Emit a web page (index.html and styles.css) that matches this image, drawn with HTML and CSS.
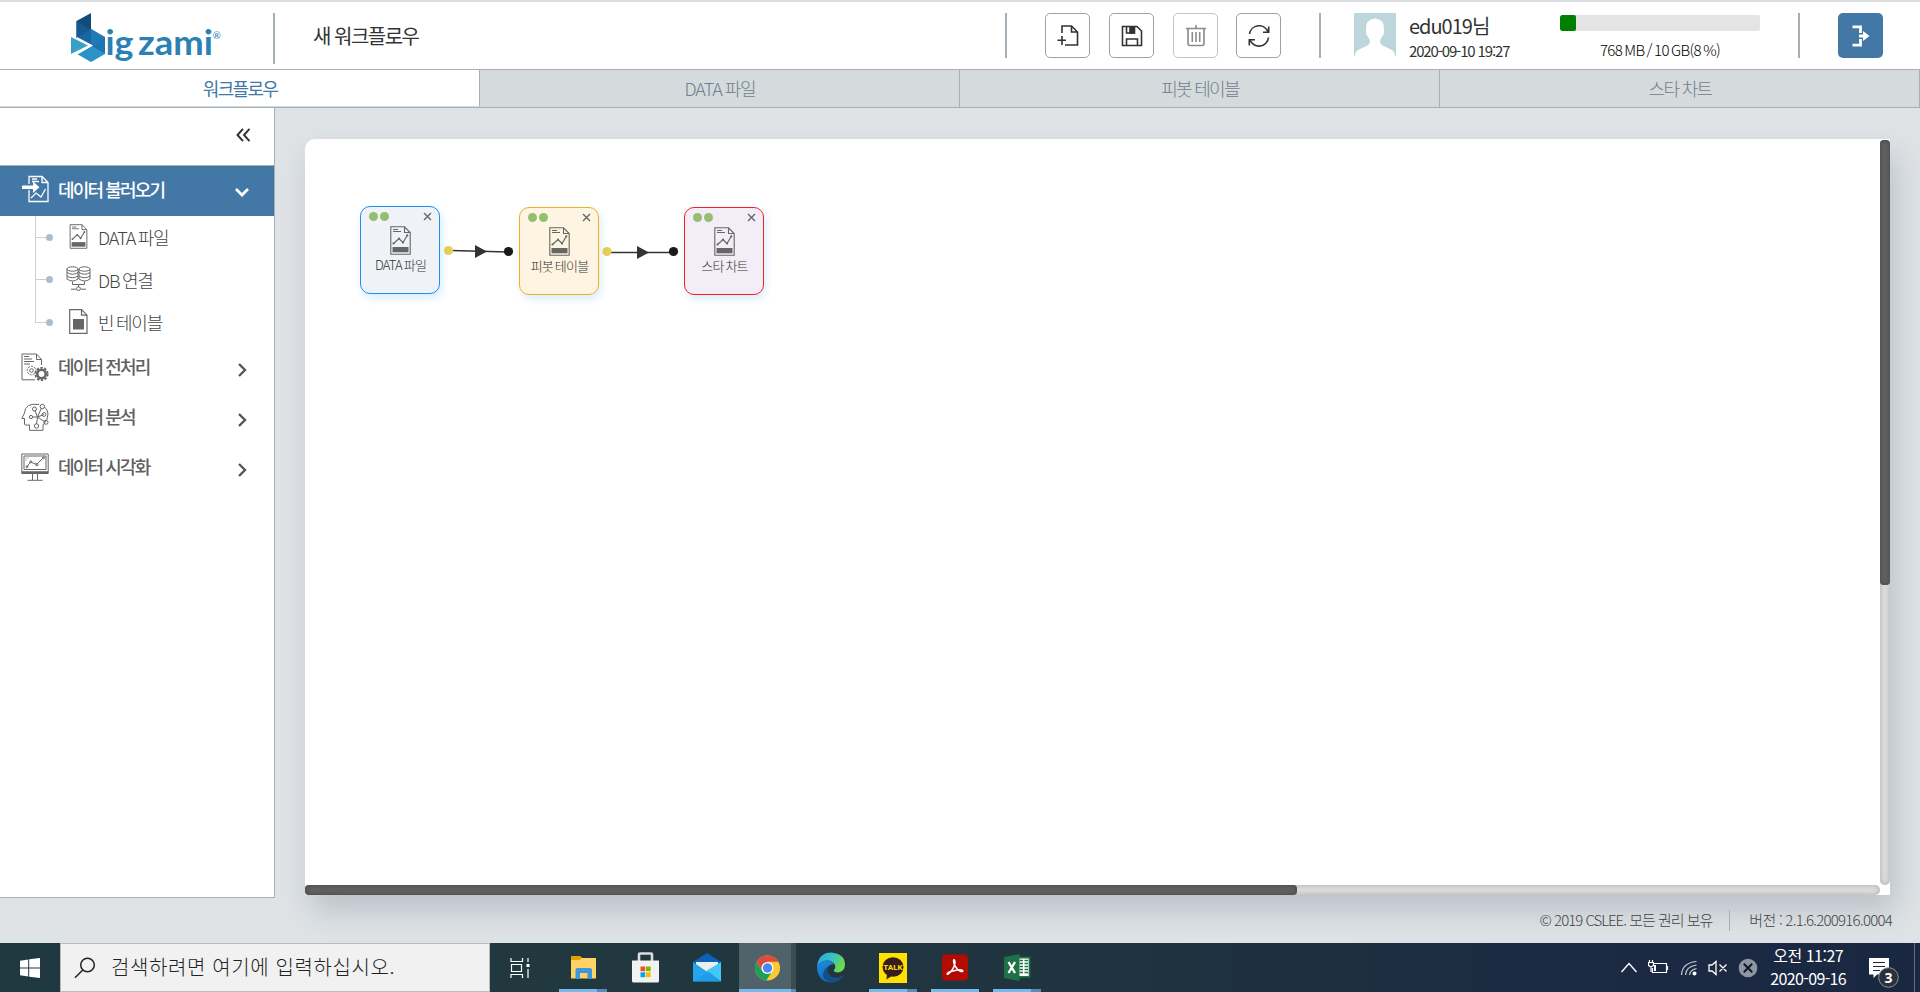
FILE: index.html
```html
<!DOCTYPE html>
<html lang="ko">
<head>
<meta charset="utf-8">
<title>Bigzami</title>
<link rel="stylesheet" href="styles.css">
</head>
<body>
<svg class="defs" width="0" height="0">
  <symbol id="chart-file" viewBox="0 0 21 29">
    <path d="M.8.8H14.5L20.2 6.500V28.200H.8zM14.500.8V6.500H20.200" fill="none" stroke="currentColor" stroke-width="1.100"/>
    <path d="M3 3.500H8M3 5.500H11" stroke="currentColor" stroke-width="1"/>
    <path d="M3.500 17.500 9 12.500 13 16.500 17.500 9" fill="none" stroke="currentColor" stroke-width="1.200"/>
    <g fill="currentColor"><circle cx="3.500" cy="17.500" r="1.100"/><circle cx="9" cy="12.700" r="1.100"/><circle cx="13" cy="16.500" r="1.100"/><circle cx="17.300" cy="9.300" r="1.100"/><path class="slab" d="M2.500 21H18.500V26.300H2.500z"/></g>
  </symbol>
</svg>
<div class="app">
  <header class="header">
    <div class="brand">
      <svg width="156" height="56" viewBox="0 0 156 56">
        <path d="M5.500 9 20 1V18L5.500 27z" fill="#124a78"/>
        <path d="M5.500 9 20 18 5.500 27z" fill="#175a91"/>
        <path d="M5.500 27 20 17 33 25 20 34z" fill="#1568a3"/>
        <path d="M20 17 34 25V42L20 34z" fill="#2279b5"/>
        <path d="M6 42 20 34 34 42 20 50z" fill="#2993c6"/>
        <path d="M20 34 34 26V42z" fill="#1c76b3"/>
        <path d="M0 25 17 33.500 0 42z" fill="#38a0c6"/>
        <path d="M5.500 26 20 33.500 5.500 42" fill="none" stroke="#fff" stroke-width="2"/>
        <text class="logo-text" x="34.500" y="43" textLength="28" lengthAdjust="spacingAndGlyphs">ig</text>
        <text class="logo-text" x="67" y="43" textLength="75" lengthAdjust="spacingAndGlyphs">zami</text>
        <text class="logo-mark" x="141.500" y="27">®</text>
      </svg>
    </div>
    <i class="bar tall"></i>
    <h1 class="title">새 워크플로우</h1>
    <i class="bar"></i>
    <div class="tools">
      <button class="tool"><svg width="22" height="22" viewBox="0 0 22 22"><path d="M5 8V1H14.500L20.500 7V20H8M14.500 1V7H20.500M5 11V20M0.500 15.300H9" /></svg></button>
      <button class="tool"><svg width="22" height="22" viewBox="0 0 22 22"><path d="M1.500 1.500H16L20.500 6V20.500H1.500zM5.500 20V14H16.500V20M5.500 2V8H13.500V2"/><path class="solid" d="M9 2H13V8H9z"/></svg></button>
      <button class="tool off"><svg width="22" height="22" viewBox="0 0 22 22"><path d="M1 3.500H21M11 0V3.500M3 4V18.500Q3 20.500 5 20.500H17Q19 20.500 19 18.500V4M7.300 7V17M11 7V17M14.700 7V17"/></svg></button>
      <button class="tool"><svg width="22" height="22" viewBox="0 0 22 22"><path d="M1.500 9A9.600 9.600 0 0 1 20 7M20.500 12.500A9.600 9.600 0 0 1 2 15M20.700 1.500V7.300H15M1.300 20.500V14.700H7"/></svg></button>
    </div>
    <i class="bar"></i>
    <div class="user">
      <svg width="42" height="43" viewBox="0 0 42 43"><path fill="#bdd6dc" d="M0 0H42V43H0z"/><path fill="#fff" d="M1 43Q1 38 6 36L13.500 32.500Q16.500 30.500 15.800 27L13.500 23Q11.500 21 12 17Q11.500 6 21 5.500Q30.500 6 30 17Q30.500 21 28.500 23L26.200 27Q25.500 30.500 28.500 32.500L36 36Q41 38 41 43z"/></svg>
      <div class="who"><span class="name">edu019님</span><span class="time">2020-09-10 19:27</span></div>
    </div>
    <div class="quota"><div class="meter"><div class="fill" style="width:8%"></div></div><span class="usage">768 MB / 10 GB(8 %)</span></div>
    <i class="bar"></i>
    <button class="exit"><svg width="20" height="22" viewBox="0 0 20 22"><path d="M1.500 1.800H9.500V8M1.500 20.200H9.500V14M8 11H14" fill="none" stroke="#fff" stroke-width="2.800"/><path d="M12 6 18.500 11 12 16z" fill="#fff"/></svg></button>
  </header>
  <nav class="tabs">
    <a class="tab on">워크플로우</a><a class="tab latin">DATA 파일</a><a class="tab">피봇 테이블</a><a class="tab">스타 차트</a>
  </nav>
  <main class="main">
    <aside class="side">
      <div class="fold"><svg width="15" height="14" viewBox="0 0 15 14"><path d="M7 .8 1.500 7 7 13.200M13.500.8 8 7 13.500 13.200"/></svg></div>
      <div class="cat open">
        <svg class="ico" width="28" height="28" viewBox="0 0 28 28"><path d="M8 9V1.500H21L27 7.500V26.500H8V15M21 1.500V7.500H27M11 4H16M11 6.500H18M10 23 15 18 20 22 24.500 14" fill="none" stroke="#fff" stroke-width="1.300"/><path d="M1 10.500H12V6.500L18.500 12.200 12 18V14H1z" fill="#fff"/></svg>
        <span class="label">데이터 불러오기</span>
        <svg class="chev" width="16" height="16" viewBox="0 0 16 16"><path d="M2 5 8 11 14 5"/></svg>
      </div>
      <ul class="tree">
        <li class="leaf"><i class="dot"></i><span class="pic"><svg width="19" height="25"><use href="#chart-file"/></svg></span>DATA 파일</li>
        <li class="leaf"><i class="dot"></i><span class="pic"><svg width="25" height="25" viewBox="0 0 25 25"><g fill="none" stroke="#666" stroke-width="1"><ellipse cx="6.500" cy="3" rx="5.500" ry="2.200"/><ellipse cx="18.500" cy="3" rx="5.500" ry="2.200"/><path d="M1 3V13Q6.500 17 12 13V3M1 6.500Q6.500 10 12 6.500M1 10Q6.500 13.500 12 10M13 3V13Q18.500 17 24 13V3M13 6.500Q18.500 10 24 6.500M13 10Q18.500 13.500 24 10M6.500 15.500V18.500H18.500V15.500M12.500 18.500V21M5 23.200H10M15 23.200H20"/><circle cx="12.500" cy="22.700" r="1.900"/></g></svg></span>DB 연결</li>
        <li class="leaf"><i class="dot"></i><span class="pic"><svg width="19" height="25" viewBox="0 0 19 25"><path d="M.7.700H12.500L18 6.200V24.300H.7zM12.500.7V6.200H18" fill="none" stroke="#666" stroke-width="1.200"/><path d="M4 10H15V20.500H4z" fill="#666"/></svg></span>빈 테이블</li>
      </ul>
      <div class="cat">
        <svg class="ico" width="28" height="28" viewBox="0 0 28 28"><g fill="none" stroke="#666"><path d="M14 26.800H1V1H15.500L20.500 6.500V12M15.500 1V6.500H20.500M3 3.500H8M3 6H11M3 8.500H13M3 11H9"/><circle cx="10.500" cy="17.500" r="4.300" stroke-dasharray="2.200 1"/><circle cx="10.500" cy="17.500" r="1.800"/><circle cx="20.500" cy="21" r="4.200" stroke-width="2.600"/><circle cx="20.500" cy="21" r="6.200" stroke-width="1.800" stroke-dasharray="2.400 1.500"/></g></svg>
        <span class="label">데이터 전처리</span>
        <svg class="chev" width="16" height="16" viewBox="0 0 16 16"><path d="M5 2 11 8 5 14"/></svg>
      </div>
      <div class="cat">
        <svg class="ico" width="28" height="28" viewBox="0 0 28 28"><g fill="none" stroke="#666"><path d="M18 1.500Q4 -.5 3.500 10L.8 15.500H3.500V21.500Q3.500 22.500 8.500 22V27.300H22V22Q27.500 16 27 11Q26.500 6 23.500 4M16.500 14 14 7.500M16.500 14 20.500 5M16.500 14H11.500M16.500 14 23 11.500M16.500 14 15.500 21M16.500 14 24 19"/><circle cx="13.500" cy="6" r="2"/><circle cx="21.300" cy="3.500" r="2.200"/><circle cx="10" cy="14" r="1.600"/><circle cx="23" cy="11.500" r="1.900"/><circle cx="15.500" cy="23" r="2.200"/><circle cx="25" cy="19.300" r="2"/></g></svg>
        <span class="label">데이터 분석</span>
        <svg class="chev" width="16" height="16" viewBox="0 0 16 16"><path d="M5 2 11 8 5 14"/></svg>
      </div>
      <div class="cat">
        <svg class="ico" width="28" height="28" viewBox="0 0 28 28"><g fill="none" stroke="#666"><path d="M.8 1H27.200V20.500H.8zM3 3H25V16.500H3zM11.500 21V27M16.500 21V27M6.500 27.300H21.500"/><path d="M.8 19.200H27.200" stroke-width="2"/><path d="M6 13.500 9.500 9 15.500 11.500 22.500 4.500"/><circle cx="6" cy="13.800" r="1"/><circle cx="9.800" cy="8.800" r="1"/><circle cx="16" cy="11.500" r="1.200"/><circle cx="22.500" cy="4.800" r="1"/><path d="M4 5H8M4 7H6"  stroke="#9cc3e8"/></g></svg>
        <span class="label">데이터 시각화</span>
        <svg class="chev" width="16" height="16" viewBox="0 0 16 16"><path d="M5 2 11 8 5 14"/></svg>
      </div>
    </aside>
    <section class="work">
      <div class="canvas">
        <div class="stage">
          <svg class="links" width="420" height="60" viewBox="0 0 420 60">
            <g stroke="#333" stroke-width="1.300"><path d="M13 24.500 70 26"/><path d="M172 26.500H235"/></g>
            <g fill="#333"><path d="M37 19V32L49 25.500zM199 20V33L211 26.500z"/></g>
            <g fill="#e8cf58"><circle cx="10.500" cy="24.500" r="4.600"/><circle cx="169" cy="25.500" r="4.600"/></g>
            <g fill="#1a1a1a"><circle cx="70.500" cy="25.500" r="4.600"/><circle cx="235.500" cy="25.500" r="4.600"/></g>
          </svg>
          <div class="node data"><i></i><i></i><svg class="x" width="9" height="9"><path d="M1 1 8 8M8 1 1 8"/></svg><svg class="file" width="21" height="29"><use href="#chart-file"/></svg><span>DATA 파일</span></div>
          <div class="node pivot"><i></i><i></i><svg class="x" width="9" height="9"><path d="M1 1 8 8M8 1 1 8"/></svg><svg class="file" width="21" height="29"><use href="#chart-file"/></svg><span>피봇 테이블</span></div>
          <div class="node star"><i></i><i></i><svg class="x" width="9" height="9"><path d="M1 1 8 8M8 1 1 8"/></svg><svg class="file" width="21" height="29"><use href="#chart-file"/></svg><span>스타 차트</span></div>
        </div>
        <div class="vtrack"><div class="vthumb"></div></div>
        <div class="htrack"><div class="hthumb"></div></div>
      </div>
      <footer class="foot"><span class="copy">© 2019 CSLEE. 모든 권리 보유</span><i></i><span class="ver">버전 : 2.1.6.200916.0004</span></footer>
    </section>
  </main>
</div>
<div class="taskbar">
  <div class="start"><svg width="20" height="20" viewBox="0 0 20 20"><path fill="#fff" d="M0 2.700 8.200 1.500V9.400H0zM9.200 1.300 20 0V9.400H9.200zM0 10.500H8.200V18.500L0 17.300zM9.200 10.500H20V20L9.200 18.700z"/></svg></div>
  <div class="search"><svg width="22" height="22" viewBox="0 0 22 22"><circle cx="13.500" cy="8" r="6.800" fill="none" stroke="#222" stroke-width="1.500"/><path d="M8.800 13 1 20.800" stroke="#222" stroke-width="1.500"/></svg><span>검색하려면 여기에 입력하십시오.</span></div>
  <div class="apps">
    <div class="app-slot view"><svg width="20" height="20" viewBox="0 0 20 20"><path d="M1 0V3.500H12.500V0M1 20V16.500H12.500V20M1.500 6.500H11.500V13.500H1.500zM18 0V4M18 11V20" fill="none" stroke="#fff" stroke-width="1.200"/><path d="M16.500 6H19.500V9H16.500z" fill="#fff"/></svg></div>
    <div class="app-slot run"><svg width="27" height="24" viewBox="0 0 27 24"><path fill="#e2a100" d="M1 0H10L12.500 2V6H1z"/><path fill="#ffd363" d="M1 4H9.500L12 2H26V22.500H1z"/><path fill="#3c97dc" d="M5.500 23V14Q5.500 12 7.500 12H20Q22 12 22 14V23H17.500V17H10V23z"/></svg></div>
    <div class="app-slot"><svg width="27" height="31" viewBox="0 0 27 31"><path d="M7 10V2.500Q7 1.500 8 1.500H19Q20 1.500 20 2.500V10" fill="none" stroke="#ddd" stroke-width="2.600"/><path fill="#f2f2f2" d="M0 8.500H27V29Q27 30.500 25.500 30.500H1.500Q0 30.500 0 29z"/><path fill="#f25022" d="M8.500 14.500H13.200V19.200H8.500z"/><path fill="#7fba00" d="M14 14.500H18.700V19.200H14z"/><path fill="#00a4ef" d="M8.500 20.300H13.200V25.200H8.500z"/><path fill="#ffb900" d="M14 20.300H18.700V25.200H14z"/></svg></div>
    <div class="app-slot"><svg width="28" height="29" viewBox="0 0 28 29"><path fill="#0a63b8" d="M0 9 14 0 28 9 14 20z"/><path fill="#eee" d="M3 9H25V13L14 19 3 13z"/><path fill="#25a5ee" d="M0 9 28 28.500H0z"/><path fill="#41c8f8" d="M28 9V28.500L13 18z"/><path fill="#1f98e4" d="M0 28.500 16 18.500 28 28.500z" opacity=".6"/></svg></div>
    <div class="app-slot run now"><svg width="27" height="28" viewBox="0 0 28 28"><circle cx="14" cy="14" r="13" fill="#fcc934"/><path fill="#dd4b3e" d="M2.700 7.500A13 13 0 0 1 25.300 7.500H14L8 16z"/><path fill="#1e9e58" d="M2.700 7.500A13 13 0 0 0 12.800 27L18.500 18 8.500 17z"/><circle cx="14" cy="14" r="6.300" fill="#fff"/><circle cx="14" cy="14" r="4.900" fill="#4c86ee"/></svg></div>
    <div class="app-slot"><svg width="30" height="31" viewBox="0 0 30 31"><defs><linearGradient id="edge-top" x2="1" y2=".4"><stop stop-color="#2aa6dd"/><stop offset=".55" stop-color="#37bfc6"/><stop offset="1" stop-color="#70d84c"/></linearGradient><linearGradient id="edge-low" x2=".6" y2="1"><stop stop-color="#1d8fe0"/><stop offset="1" stop-color="#1161b4"/></linearGradient></defs><path fill="url(#edge-top)" d="M1 14Q3 .5 15 .5Q29 1.500 29 13Q28.500 20 22 20.500Q17.500 20.500 18 18Q20 16 19 13Q17 8.500 11 8.500Q4 9 1 14z"/><path fill="url(#edge-low)" d="M1 14Q4 8.500 11 8.500Q16 8.500 18 12Q9 13.500 11.500 20.500Q14 26 20 26Q24 26 27.500 23.500Q23 30.500 15 30.500Q1 29.500 1 14z"/><path fill="#134d8c" d="M11.500 15Q9.500 24 18 26.500Q24 27 27.500 23.300Q23 30.500 16 30.500Q5 28 7.500 20Q8.500 16.500 11.500 15z"/></svg></div>
    <div class="app-slot run"><svg width="28" height="30" viewBox="0 0 28 30"><path fill="#ffe100" d="M0 0H28V30H0z"/><ellipse cx="14" cy="14" rx="10.500" ry="9.800" fill="#371d1e"/><path fill="#371d1e" d="M8 20 7.500 26.500 14 22z"/><text class="talk" x="14" y="17">TALK</text></svg></div>
    <div class="app-slot run solo"><svg width="26" height="27" viewBox="0 0 27 27"><rect width="27" height="27" rx="4" fill="#b30b00"/><path d="M6 20.500Q12 16.500 13.500 9Q13.500 5.500 12.500 5.500Q11.500 6 12.500 9.500Q15.500 17 20.500 17.800Q22.500 17.500 21 16.200Q17.500 14.700 6.800 18.500Q4.500 20.500 6 20.500" fill="none" stroke="#fff" stroke-width="1.600"/></svg></div>
    <div class="app-slot run"><svg width="27" height="27" viewBox="0 0 27 27"><path fill="#fff" d="M14 4H25V23H14z"/><path d="M15.500 6.500H19M15.500 9.500H19M15.500 12.500H19M15.500 15.500H19M15.500 18.500H19M20.500 6.500H24M20.500 9.500H24M20.500 12.500H24M20.500 15.500H24M20.500 18.500H24M14 3.600H25.500V22.800H14" fill="none" stroke="#1e7145" stroke-width="1.700"/><path fill="#1e7145" d="M0 3 15.500 0V27L0 24z"/><path d="M4.500 8 11 19M11 8 4.500 19" stroke="#fff" stroke-width="2.300"/></svg></div>
  </div>
  <div class="tray">
    <svg width="18" height="20" viewBox="0 0 18 20"><path d="M1.500 14 9 5.500 16.500 14" fill="none" stroke="#fff" stroke-width="1.400"/></svg>
    <svg width="21" height="20" viewBox="0 0 21 20"><path d="M6 5.500H18.500V14.500H4.500V10M19.500 8V12M1.500 2V5M4.500 2V5M.5 4.500H5.500V7.500L3 9 .5 7.500zM3 9V14" fill="none" stroke="#fff" stroke-width="1.200"/><path fill="#fff" d="M6 7H8V13H6z"/></svg>
    <svg width="18" height="20" viewBox="0 0 18 20"><path d="M1.500 17Q2 5 16.500 3.500M5.500 17Q6 8.500 16.500 7M9.500 17Q10 12 16.500 10.500" fill="none" stroke="#c9ced8" stroke-width="1.200"/><circle cx="14.500" cy="15.500" r="2" fill="#fff"/></svg>
    <svg width="20" height="20" viewBox="0 0 20 20"><path d="M1 7H4L8 3.500V16.500L4 13H1zM11.500 6.500 18.500 13.500M18.500 6.500 11.500 13.500" fill="none" stroke="#fff" stroke-width="1.300"/></svg>
    <svg width="20" height="20" viewBox="0 0 20 20"><circle cx="10" cy="10" r="9.300" fill="#8e95a3"/><path d="M5.800 5.800 14.200 14.200M14.200 5.800 5.800 14.200" stroke="#111824" stroke-width="2"/></svg>
  </div>
  <div class="clock"><span class="hour">오전 11:27</span><span class="day">2020-09-16</span></div>
  <div class="notice"><svg width="30" height="32" viewBox="0 0 30 32"><path fill="#fff" d="M0 1H20V17.500H8L4.500 21V17.500H0z"/><path d="M4 5.500H16M4 9.500H16M4 13.500H11" stroke="#1b2942" stroke-width="1.200"/><circle cx="19.500" cy="20.500" r="9.800" fill="#2b303a" stroke="#8d929b"/><text class="badge" x="19.500" y="26">3</text></svg></div>
</div>
</body>
</html>
```
FILE: styles.css
```css
* { box-sizing: border-box; }
body { margin: 0; width: 1920px; height: 992px; overflow: hidden; display: flex; flex-direction: column; font-family: "Noto Sans CJK KR", "Noto Sans", sans-serif; color: #333; }
svg { display: block; flex: none; }
.defs { position: absolute; }
.app { height: 943px; flex: none; display: flex; flex-direction: column; }
button { padding: 0; font: inherit; }

.header { flex: none; height: 70px; border-top: 2px solid #dbdce1; border-bottom: 1px solid #a5afb4; padding-top: 11px; display: flex; align-items: flex-start; background: #fff; }
.brand { width: 273px; padding-left: 71px; }
.brand svg { margin-top: -1px; }
.logo-text { font: 700 34px Lato, sans-serif; fill: #2b80b4; }
.logo-mark { font: 10px Lato, sans-serif; fill: #2b80b4; }
.bar { width: 2px; height: 45px; background: #a5b0b6; flex: none; }
.bar.tall { height: 51px; }
.title { margin: 0 0 0 38px; width: 692px; font-size: 20px; font-weight: 400; line-height: 46px; letter-spacing: -1.500px; }
.tools { display: flex; gap: 19px; width: 312px; padding-left: 38px; }
.tool { width: 45px; height: 45px; border: 1px solid #a0a0a0; border-radius: 5px; background: #fff; display: grid; place-items: center; }
.tool:last-child { margin-left: -1px; }
.tool path { fill: none; stroke: #333; stroke-width: 1.600; }
.tool .solid { fill: #333; }
.tool.off { border-color: #c4c4c4; }
.tool.off path { stroke: #8a8a8a; }
.user { display: flex; width: 239px; padding-left: 33px; gap: 13px; }
.who { display: flex; flex-direction: column; white-space: nowrap; }
.name { font-size: 20px; line-height: 25px; letter-spacing: -1px; }
.time { font-size: 15px; line-height: 26px; letter-spacing: -1.150px; }
.quota { width: 238px; padding-top: 2px; }
.meter { width: 200px; height: 16px; border-radius: 2px; background: #e4e4e4; overflow: hidden; }
.fill { height: 16px; background: #008000; border-radius: 2px; }
.usage { display: block; width: 200px; text-align: center; font-size: 15px; font-weight: 300; color: #000; line-height: 22px; padding-top: 8px; letter-spacing: -.6px; word-spacing: -1.500px; }
.exit { margin-left: 38px; width: 45px; height: 45px; border: 0; border-radius: 5px; background: #4277a6; display: grid; place-items: center; }

.tabs { flex: none; display: flex; height: 38px; border-bottom: 1px solid #a5b0b5; background: #d5dadd; }
.tab { width: 480px; height: 37px; padding-left: 1px; border-right: 1px solid #a5b0b5; text-align: center; font-size: 18px; font-weight: 300; line-height: 37px; letter-spacing: -1.700px; color: #708090; }
.tab.latin { letter-spacing: -1.150px; word-spacing: -1px; }
.tab.on { background: #fff; color: #4277a6; font-weight: 400; border-bottom: 1px solid #d5dadd; }

.main { flex: 1; display: flex; background: #dfe3e6; }
.side { width: 275px; height: 790px; background: #fff; border-right: 1px solid #a5b0b9; border-bottom: 1px solid #a5b0b9; }
.fold { height: 58px; padding: 20px 0 0 236px; border-bottom: 1px solid #a5b0b5; }
.fold path { fill: none; stroke: #333; stroke-width: 2; }
.cat { height: 50px; display: flex; align-items: center; padding: 0 24px 0 21px; color: #606060; }
.label { flex: 1; padding-left: 9px; font-size: 18px; font-weight: 500; letter-spacing: -1.850px; line-height: 26px; margin-top: -7px; }
.ico { margin-top: -5px; }
.chev { margin-top: 2px; }
.chev path { fill: none; stroke: #555; stroke-width: 2.400; }
.cat.open { background: #4277a6; color: #fff; }
.cat.open .label { margin-top: -5px; }
.cat.open .chev path { stroke: #fff; stroke-width: 2.800; }
.tree { list-style: none; margin: 0; padding: 0 0 5px 35px; height: 128px; position: relative; }
.tree::before { content: ""; position: absolute; left: 35px; top: 0; width: 1px; height: 107px; background: #ccd0d4; }
.leaf { height: 42.500px; display: flex; align-items: center; font-size: 18px; font-weight: 300; letter-spacing: -1.200px; word-spacing: -1.200px; color: #444; }
.leaf::before { content: ""; width: 11px; height: 1px; background: #ccd0d4; }
.dot { width: 7px; height: 7px; border-radius: 50%; background: #afbccb; }
.pic { width: 25px; margin: -2px 7px 0 13px; display: grid; place-items: center; color: #666; }

.work { flex: 1; padding: 31px 28px 0 30px; display: flex; flex-direction: column; }
.canvas { flex: none; width: 1585px; height: 756px; background: #fff; border-radius: 10px 0 0 0; box-shadow: 6px 16px 30px rgba(110, 125, 140, .32); display: grid; grid-template: 746px 10px / 1575px 10px; }
.stage { position: relative; }
.vtrack { margin-top: 1px; background: #dcdcdc; border-radius: 5px; box-shadow: inset 0 0 5px #aaa; }
.vthumb { height: 445px; border-radius: 4px; background: #616161; box-shadow: inset 0 0 5px #444; }
.htrack { background: #dcdcdc; border-radius: 5px; box-shadow: inset 0 0 5px #aaa; }
.hthumb { width: 992px; height: 10px; border-radius: 4px; background: #616161; box-shadow: inset 0 0 5px #444; }
.links { position: absolute; left: 133px; top: 87px; }
.node { position: absolute; width: 80px; height: 88px; border: 1px solid; border-radius: 10px; box-shadow: 2px 4px 8px rgba(60, 160, 240, .2); padding: 5px 7px 0 8px; display: flex; flex-wrap: wrap; gap: 0 2px; align-content: flex-start; }
.node i { width: 9px; height: 9px; border-radius: 50%; background: #94bf73; }
.node .x { margin: 0 0 0 auto; }
.x path { stroke: #666; stroke-width: 1.400; }
.node .file { margin: 5px 21px 0; color: #666; }
.node .slab { fill: #444; }
.node span { width: 100%; text-align: center; font-size: 13px; font-weight: 300; letter-spacing: -.8px; word-spacing: -1px; line-height: 18px; margin-top: 1px; color: #333; white-space: nowrap; }
.data { left: 55px; top: 67px; border-color: #1e8fea; background: #eff3f8; }
.pivot { left: 214px; top: 68px; border-color: #f2b01e; background: #fdf5e2; }
.star { left: 379px; top: 68px; border-color: #fb1d1d; background: #f3edf8; }
.foot { display: flex; align-items: center; justify-content: flex-end; height: 48px; padding-top: 2px; font-size: 15px; font-weight: 300; color: #444; line-height: 22px; }
.foot i { width: 1px; height: 21px; margin: 0 19px 0 17px; background: #a5b0b9; }
.copy { letter-spacing: -1px; }
.ver { letter-spacing: -.750px; }

.taskbar { flex: none; height: 49px; display: flex; background: linear-gradient(90deg, #20383f, #21383f 28%, #20343f 55%, #1b2b42 80%, #1a2741); color: #fff; }
.start { width: 60px; display: grid; place-items: center; }
.search { width: 430px; background: #f1f1f1; border: 1px solid #bbb; display: flex; align-items: center; padding-left: 13px; gap: 15px; color: #222; font-size: 20px; font-weight: 300; letter-spacing: .6px; white-space: nowrap; }
.search span { margin-top: -2px; }
.apps { flex: none; display: flex; width: 1130px; }
.app-slot { flex: none; width: 48px; margin: 0 7px; height: 49px; display: grid; place-items: center; }
.view { margin: 0 8px 0 6px; }
.run { background: linear-gradient(90deg, #76b9ed 79%, #5a8bb4 79%) bottom / 100% 3px no-repeat; }
.solo { background: linear-gradient(#76b9ed, #76b9ed) bottom / 100% 3px no-repeat; }
.now { width: 57px; margin: 0 4px 0 1px; background: linear-gradient(90deg, #76b9ed 92%, #5a8bb4 92%) bottom / 100% 3px no-repeat, linear-gradient(90deg, #4f626a 92%, #3d4c51 92%); }
.talk { font: 700 8px Roboto, sans-serif; fill: #ffe100; text-anchor: middle; }
.tray { flex: none; display: flex; align-items: center; gap: 10.300px; }
.clock { flex: none; display: flex; flex-direction: column; align-items: center; width: 100px; font-size: 16px; line-height: 23px; padding-top: 1px; white-space: nowrap; }
.hour { letter-spacing: -.5px; }
.day { letter-spacing: -.650px; }
.notice { width: 57px; border-right: 1px solid #626b7c; padding: 14px 0 0 11px; }
.badge { font: 700 14px "Noto Sans", sans-serif; fill: #fff; text-anchor: middle; }
```
